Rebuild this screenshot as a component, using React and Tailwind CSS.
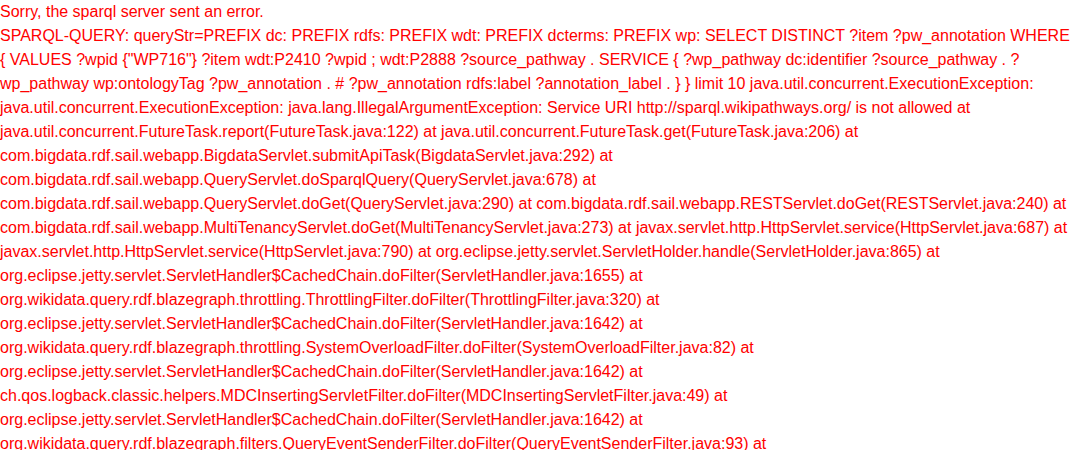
import React from "react";

const queryText =
  'SPARQL-QUERY: queryStr=PREFIX dc: PREFIX rdfs: PREFIX wdt: PREFIX dcterms: PREFIX wp: SELECT DISTINCT ?item ?pw_annotation WHERE { VALUES ?wpid {"WP716"} ?item wdt:P2410 ?wpid ; wdt:P2888 ?source_pathway . SERVICE { ?wp_pathway dc:identifier ?source_pathway . ?wp_pathway wp:ontologyTag ?pw_annotation . # ?pw_annotation rdfs:label ?annotation_label . } } limit 10 java.util.concurrent.ExecutionException: java.util.concurrent.ExecutionException: java.lang.IllegalArgumentException: Service URI http://sparql.wikipathways.org/ is not allowed at java.util.concurrent.FutureTask.report(FutureTask.java:122) at java.util.concurrent.FutureTask.get(FutureTask.java:206) at com.bigdata.rdf.sail.webapp.BigdataServlet.submitApiTask(BigdataServlet.java:292) at com.bigdata.rdf.sail.webapp.QueryServlet.doSparqlQuery(QueryServlet.java:678) at com.bigdata.rdf.sail.webapp.QueryServlet.doGet(QueryServlet.java:290) at com.bigdata.rdf.sail.webapp.RESTServlet.doGet(RESTServlet.java:240) at com.bigdata.rdf.sail.webapp.MultiTenancyServlet.doGet(MultiTenancyServlet.java:273) at javax.servlet.http.HttpServlet.service(HttpServlet.java:687) at javax.servlet.http.HttpServlet.service(HttpServlet.java:790) at org.eclipse.jetty.servlet.ServletHolder.handle(ServletHolder.java:865) at org.eclipse.jetty.servlet.ServletHandler$CachedChain.doFilter(ServletHandler.java:1655) at org.wikidata.query.rdf.blazegraph.throttling.ThrottlingFilter.doFilter(ThrottlingFilter.java:320) at org.eclipse.jetty.servlet.ServletHandler$CachedChain.doFilter(ServletHandler.java:1642) at org.wikidata.query.rdf.blazegraph.throttling.SystemOverloadFilter.doFilter(SystemOverloadFilter.java:82) at org.eclipse.jetty.servlet.ServletHandler$CachedChain.doFilter(ServletHandler.java:1642) at ch.qos.logback.classic.helpers.MDCInsertingServletFilter.doFilter(MDCInsertingServletFilter.java:49) at org.eclipse.jetty.servlet.ServletHandler$CachedChain.doFilter(ServletHandler.java:1642) at org.wikidata.query.rdf.blazegraph.filters.QueryEventSenderFilter.doFilter(QueryEventSenderFilter.java:93) at';

const App = () => {
  return (
    <div className="w-[1070px] h-[450px] overflow-hidden bg-white font-['Liberation_Sans',Arial,sans-serif] text-base leading-6 text-[#ff0000]">
      <div>Sorry, the sparql server sent an error.</div>
      <div>{queryText}</div>
    </div>
  );
};

export default App;
